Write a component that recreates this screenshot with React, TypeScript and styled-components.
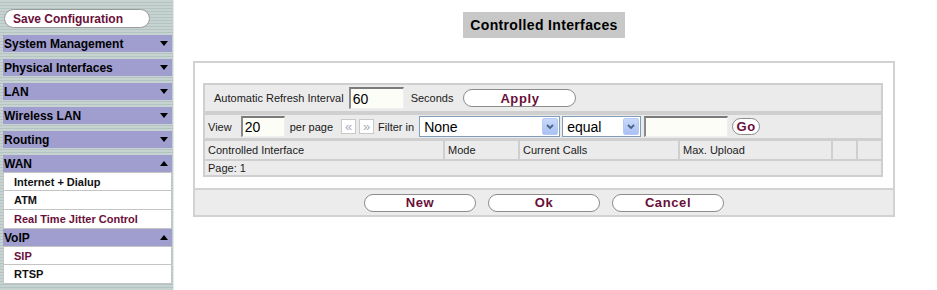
import React from 'react';
import styled, { createGlobalStyle } from 'styled-components';

const Global = createGlobalStyle`
  html, body { margin: 0; padding: 0; background: #ffffff; }
  body { font-family: "Liberation Sans", Arial, sans-serif; color: #000; }
  * { box-sizing: border-box; }
`;

const MAROON = '#6a0f3a';

const Page = styled.div`
  display: flex;
  width: 937px;
  height: 290px;
  overflow: hidden;
`;

/* ---------- Sidebar ---------- */
const Sidebar = styled.nav`
  width: 174px;
  flex: none;
  height: 290px;
  padding: 9px 1px 0 3px;
  display: flex;
  flex-direction: column;
  background: repeating-linear-gradient(
    to bottom,
    #c6d3d0 0px,
    #c6d3d0 2px,
    #b3c4c3 2px,
    #b3c4c3 3px
  );
  border-right: 1px solid #e4ebe9;
`;

const SaveButton = styled.button`
  width: 146px;
  height: 19px;
  margin: 0 0 0 1px;
  padding: 0 0 0 8px;
  text-align: left;
  background: #ffffff;
  border: 1px solid #9a9a9a;
  border-radius: 10px;
  font: bold 12px "Liberation Sans", Arial, sans-serif;
  color: ${MAROON};
  cursor: pointer;
`;

const MenuHeader = styled.div<{ $tight?: boolean }>`
  height: 17px;
  margin-top: ${(p) => (p.$tight ? 0 : 7)}px;
  background: #9f9ecf;
  display: flex;
  align-items: center;
  justify-content: space-between;
  padding: 0 4px 0 1px;
  font: bold 12px "Liberation Sans", Arial, sans-serif;
  color: #000;
`;

const Caret = styled.span<{ $up?: boolean }>`
  width: 0;
  height: 0;
  border-left: 4px solid transparent;
  border-right: 4px solid transparent;
  ${(p) =>
    p.$up ? 'border-bottom: 5px solid #000;' : 'border-top: 5px solid #000;'}
`;

const SubItem = styled.div<{ $active?: boolean }>`
  height: 19px;
  background: #ffffff;
  border: 1px solid #c4c4c4;
  border-top: none;
  display: flex;
  align-items: center;
  padding-left: 10px;
  font: bold 11px "Liberation Sans", Arial, sans-serif;
  color: ${(p) => (p.$active ? MAROON : '#111')};
`;

const SubFirst = styled(SubItem)`
  border-top: 1px solid #c4c4c4;
`;

/* ---------- Main ---------- */
const Main = styled.main`
  flex: none;
  width: 702px;
  margin-left: 19px;
  padding-top: 12px;
  display: flex;
  flex-direction: column;
  align-items: center;
`;

const Title = styled.h1`
  margin: 0;
  height: 26px;
  padding: 0 7px;
  background: #c8c8c8;
  font: bold 14px "Liberation Sans", Arial, sans-serif;
  line-height: 26px;
  letter-spacing: 0.35px;
  color: #000;
`;

const Panel = styled.section`
  margin-top: 23px;
  width: 702px;
  border: 2px solid #d2d2d2;
  background: #ffffff;
  display: flex;
  flex-direction: column;
`;

const PanelBody = styled.div`
  padding: 20px 10px 11px 8px;
`;

const Table = styled.div`
  background: #cfcfcf;
  padding: 2px;
  display: flex;
  flex-direction: column;
`;

const Row = styled.div<{ $h: number; $mt?: number }>`
  height: ${(p) => p.$h}px;
  margin-top: ${(p) => p.$mt ?? 0}px;
  background: #ebebeb;
  display: flex;
  align-items: center;
  font-size: 11px;
  color: #1a1a1a;
`;

const HeaderRow = styled.div`
  height: 18px;
  margin-top: 3px;
  display: grid;
  grid-template-columns: 238px 73px 158px 151px 23px 23px;
  column-gap: 2px;
`;

const HeadCell = styled.div`
  background: #ebebeb;
  font-size: 11px;
  color: #1a1a1a;
  display: flex;
  align-items: center;
  padding-left: 3px;
`;

const Label = styled.span<{ $ml?: number }>`
  margin-left: ${(p) => p.$ml ?? 0}px;
  white-space: nowrap;
`;

const SunkenInput = styled.input<{ $w: number; $h: number; $ml?: number }>`
  width: ${(p) => p.$w}px;
  height: ${(p) => p.$h}px;
  margin-left: ${(p) => p.$ml ?? 0}px;
  padding: 0 0 0 2px;
  border-top: 2px solid #7a7a7a;
  border-left: 2px solid #8a8a8a;
  border-bottom: 1px solid #efefef;
  border-right: 1px solid #efefef;
  background: #fdfdf7;
  font: 14px "Liberation Sans", Arial, sans-serif;
  color: #000;
  outline: none;
`;

const Pill = styled.button<{ $w: number; $h?: number; $ml?: number }>`
  width: ${(p) => p.$w}px;
  height: ${(p) => p.$h ?? 18}px;
  margin-left: ${(p) => p.$ml ?? 0}px;
  padding: 0;
  background: #ffffff;
  border: 1px solid #8c8c8c;
  border-radius: 9px;
  font: bold 13px "Liberation Sans", Arial, sans-serif;
  line-height: 1;
  letter-spacing: 0.6px;
  color: ${MAROON};
  cursor: pointer;
`;

const PageNav = styled.button<{ $ml?: number }>`
  width: 15px;
  height: 15px;
  margin-left: ${(p) => p.$ml ?? 0}px;
  padding: 0;
  background: #ffffff;
  border: 1px solid #c9c9c9;
  font: 13px "Liberation Sans", Arial, sans-serif;
  line-height: 12px;
  color: #a9aab8;
`;

const Select = styled.div<{ $w: number; $ml?: number }>`
  position: relative;
  width: ${(p) => p.$w}px;
  height: 21px;
  margin-left: ${(p) => p.$ml ?? 0}px;
  background: #ffffff;
  border: 1px solid #7f9db9;
  display: flex;
  align-items: center;
  padding-left: 4px;
  font: 14px "Liberation Sans", Arial, sans-serif;
  color: #000;
`;

const SelectArrow = styled.span`
  position: absolute;
  right: 1px;
  top: 1px;
  width: 16px;
  height: 17px;
  border: 1px solid #b7c9f2;
  border-radius: 2px;
  background: linear-gradient(to bottom, #c9d9fc, #a9c1f3);
  display: flex;
  align-items: center;
  justify-content: center;
`;

const Footer = styled.div`
  height: 27px;
  border-top: 2px solid #d2d2d2;
  background: #ececec;
  display: flex;
  align-items: center;
  justify-content: center;
  gap: 12px;
`;

const Chevron = () => (
  <svg width="8" height="6" viewBox="0 0 8 6">
    <path d="M1 1 L4 4 L7 1" fill="none" stroke="#4d6185" strokeWidth="1.8" />
  </svg>
);

const App: React.FC = () => (
  <>
    <Global />
    <Page>
      <Sidebar>
        <SaveButton>Save Configuration</SaveButton>
        <MenuHeader>
          System Management <Caret />
        </MenuHeader>
        <MenuHeader>
          Physical Interfaces <Caret />
        </MenuHeader>
        <MenuHeader>
          LAN <Caret />
        </MenuHeader>
        <MenuHeader>
          Wireless LAN <Caret />
        </MenuHeader>
        <MenuHeader>
          Routing <Caret />
        </MenuHeader>
        <MenuHeader>
          WAN <Caret $up />
        </MenuHeader>
        <SubFirst>Internet + Dialup</SubFirst>
        <SubItem>ATM</SubItem>
        <SubItem $active>Real Time Jitter Control</SubItem>
        <MenuHeader $tight>
          VoIP <Caret $up />
        </MenuHeader>
        <SubFirst $active>SIP</SubFirst>
        <SubItem>RTSP</SubItem>
      </Sidebar>

      <Main>
        <Title>Controlled Interfaces</Title>
        <Panel>
          <PanelBody>
            <Table>
              <Row $h={26}>
                <Label $ml={9}>Automatic Refresh Interval</Label>
                <SunkenInput $w={55} $h={22} $ml={5} value="60" readOnly />
                <Label $ml={7}>Seconds</Label>
                <Pill $w={113} $ml={10}>
                  Apply
                </Pill>
              </Row>
              <Row $h={23} $mt={4}>
                <Label $ml={3}>View</Label>
                <SunkenInput $w={44} $h={21} $ml={9} value="20" readOnly />
                <Label $ml={5}>per page</Label>
                <PageNav $ml={8}>«</PageNav>
                <PageNav $ml={3}>»</PageNav>
                <Label $ml={4}>Filter in</Label>
                <Select $w={141} $ml={5}>
                  None
                  <SelectArrow>
                    <Chevron />
                  </SelectArrow>
                </Select>
                <Select $w={79} $ml={2}>
                  equal
                  <SelectArrow>
                    <Chevron />
                  </SelectArrow>
                </Select>
                <SunkenInput $w={84} $h={21} $ml={3} value="" readOnly />
                <Pill $w={28} $h={17} $ml={4}>
                  Go
                </Pill>
              </Row>
              <HeaderRow>
                <HeadCell>Controlled Interface</HeadCell>
                <HeadCell>Mode</HeadCell>
                <HeadCell>Current Calls</HeadCell>
                <HeadCell>Max. Upload</HeadCell>
                <HeadCell />
                <HeadCell />
              </HeaderRow>
              <Row $h={14} $mt={2}>
                <Label $ml={3}>Page: 1</Label>
              </Row>
            </Table>
          </PanelBody>
          <Footer>
            <Pill $w={112}>New</Pill>
            <Pill $w={112}>Ok</Pill>
            <Pill $w={112}>Cancel</Pill>
          </Footer>
        </Panel>
      </Main>
    </Page>
  </>
);

export default App;
